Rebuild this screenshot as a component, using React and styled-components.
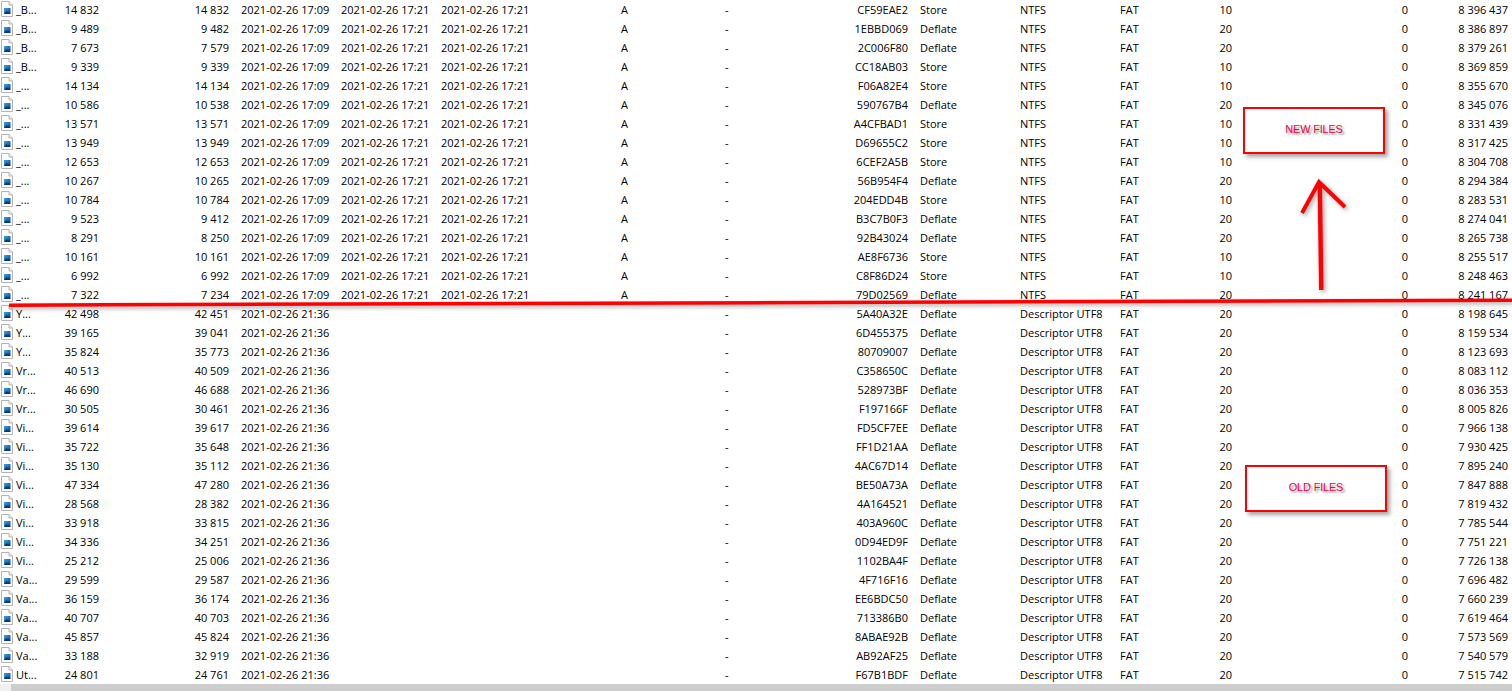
import React from 'react'
import styled, { createGlobalStyle } from 'styled-components'

const GlobalStyle = createGlobalStyle`
  html, body {
    margin: 0;
    height: 100%;
    overflow: hidden;
    background: #fff;
  }
`

const Window = styled.div`
  position: relative;
  width: 1512px;
  height: 691px;
  overflow: hidden;
  display: flex;
  flex-direction: column;
  background: #fff;
  color: #000;
  font-family: 'Open Sans', 'Liberation Sans', sans-serif;
  font-size: 11px;
`

const List = styled.div`
  flex: 1;
  display: flex;
  flex-direction: column;
`

const Row = styled.div`
  display: grid;
  grid-template-columns: 40px 59px 130px 112px 100px 100px 179px 100px 88px 112px 100px 60px 52px 176px 100px;
  height: 19px;
  line-height: 19px;
  white-space: nowrap;
`

const NameCell = styled.div`
  display: flex;
  align-items: center;
  gap: 3px;
  padding-left: 1px;
  svg {
    margin-bottom: 2px;
  }
`

const Cell = styled.div`
  text-align: ${(p) => (p.$right ? 'right' : 'left')};
  padding-left: ${(p) => p.$pad || 0}px;
`

const ScrollBar = styled.div`
  height: 7px;
  display: flex;
  background: #cdcdcd;
`

const ScrollButton = styled.div`
  width: 11px;
  background: #f0f0f0;
  overflow: hidden;
`

const Callout = styled.div`
  position: absolute;
  left: ${(p) => p.$x}px;
  top: ${(p) => p.$y}px;
  width: 142px;
  height: 47px;
  box-sizing: border-box;
  padding-bottom: 3px;
  border: 2px solid #f00;
  box-shadow: 3px 3px 4px rgba(0, 0, 0, 0.35);
  display: flex;
  align-items: center;
  justify-content: center;
  color: #f5003c;
  font-family: 'Liberation Sans', sans-serif;
  font-size: 11px;
  letter-spacing: -0.2px;
  text-shadow: 2px 2px 2px rgba(0, 0, 0, 0.4);
`

const Marks = styled.svg`
  position: absolute;
  left: 0;
  top: 0;
  filter: drop-shadow(2px 2px 2px rgba(0, 0, 0, 0.35));
`

const FileIcon = () => (
  <svg width="12" height="16" viewBox="0 0 12 16">
    <defs>
      <linearGradient id="pic" x1="0" y1="0" x2="1" y2="1">
        <stop offset="0" stopColor="#3aa6e8" />
        <stop offset="1" stopColor="#0b3f8c" />
      </linearGradient>
    </defs>
    <path d="M0.5 0.5H8L11.5 4V15.5H0.5Z" fill="#fff" stroke="#b4b4b4" />
    <path d="M8 0.5V4H11.5" fill="#eee" stroke="#b4b4b4" />
    <rect x="3" y="7" width="6.5" height="6" fill="url(#pic)" />
    <path d="M3 13L5.5 10L7 11.5L8 10.5L9.5 13Z" fill="#0a3479" />
  </svg>
)

const NEW_ROWS = [
  ['_B...', '14 832', '14 832', 'CF59EAE2', 'Store', '8 396 437'],
  ['_B...', '9 489', '9 482', '1EBBD069', 'Deflate', '8 386 897'],
  ['_B...', '7 673', '7 579', '2C006F80', 'Deflate', '8 379 261'],
  ['_B...', '9 339', '9 339', 'CC18AB03', 'Store', '8 369 859'],
  ['_...', '14 134', '14 134', 'F06A82E4', 'Store', '8 355 670'],
  ['_...', '10 586', '10 538', '590767B4', 'Deflate', '8 345 076'],
  ['_...', '13 571', '13 571', 'A4CFBAD1', 'Store', '8 331 439'],
  ['_...', '13 949', '13 949', 'D69655C2', 'Store', '8 317 425'],
  ['_...', '12 653', '12 653', '6CEF2A5B', 'Store', '8 304 708'],
  ['_...', '10 267', '10 265', '56B954F4', 'Deflate', '8 294 384'],
  ['_...', '10 784', '10 784', '204EDD4B', 'Store', '8 283 531'],
  ['_...', '9 523', '9 412', 'B3C7B0F3', 'Deflate', '8 274 041'],
  ['_...', '8 291', '8 250', '92B43024', 'Deflate', '8 265 738'],
  ['_...', '10 161', '10 161', 'AE8F6736', 'Store', '8 255 517'],
  ['_...', '6 992', '6 992', 'C8F86D24', 'Store', '8 248 463'],
  ['_...', '7 322', '7 234', '79D02569', 'Deflate', '8 241 167'],
]

const OLD_ROWS = [
  ['Y...', '42 498', '42 451', '5A40A32E', 'Deflate', '8 198 645'],
  ['Y...', '39 165', '39 041', '6D455375', 'Deflate', '8 159 534'],
  ['Y...', '35 824', '35 773', '80709007', 'Deflate', '8 123 693'],
  ['Vr...', '40 513', '40 509', 'C358650C', 'Deflate', '8 083 112'],
  ['Vr...', '46 690', '46 688', '528973BF', 'Deflate', '8 036 353'],
  ['Vr...', '30 505', '30 461', 'F197166F', 'Deflate', '8 005 826'],
  ['Vi...', '39 614', '39 617', 'FD5CF7EE', 'Deflate', '7 966 138'],
  ['Vi...', '35 722', '35 648', 'FF1D21AA', 'Deflate', '7 930 425'],
  ['Vi...', '35 130', '35 112', '4AC67D14', 'Deflate', '7 895 240'],
  ['Vi...', '47 334', '47 280', 'BE50A73A', 'Deflate', '7 847 888'],
  ['Vi...', '28 568', '28 382', '4A164521', 'Deflate', '7 819 432'],
  ['Vi...', '33 918', '33 815', '403A960C', 'Deflate', '7 785 544'],
  ['Vi...', '34 336', '34 251', '0D94ED9F', 'Deflate', '7 751 221'],
  ['Vi...', '25 212', '25 006', '1102BA4F', 'Deflate', '7 726 138'],
  ['Va...', '29 599', '29 587', '4F716F16', 'Deflate', '7 696 482'],
  ['Va...', '36 159', '36 174', 'EE6BDC50', 'Deflate', '7 660 239'],
  ['Va...', '40 707', '40 703', '713386B0', 'Deflate', '7 619 464'],
  ['Va...', '45 857', '45 824', '8ABAE92B', 'Deflate', '7 573 569'],
  ['Va...', '33 188', '32 919', 'AB92AF25', 'Deflate', '7 540 579'],
  ['Ut...', '24 801', '24 761', 'F67B1BDF', 'Deflate', '7 515 742'],
]

const FileRow = ({ data, isNew }) => {
  const [name, size, packed, crc, method, offset] = data
  return (
    <Row>
      <NameCell>
        <FileIcon />
        {name}
      </NameCell>
      <Cell $right>{size}</Cell>
      <Cell $right>{packed}</Cell>
      <Cell $pad={12}>2021-02-26 {isNew ? '17:09' : '21:36'}</Cell>
      <Cell>{isNew && '2021-02-26 17:21'}</Cell>
      <Cell>{isNew && '2021-02-26 17:21'}</Cell>
      <Cell $pad={80}>{isNew && 'A'}</Cell>
      <Cell $pad={5}>-</Cell>
      <Cell $right>{crc}</Cell>
      <Cell $pad={12}>{method}</Cell>
      <Cell>{isNew ? 'NTFS' : 'Descriptor UTF8'}</Cell>
      <Cell>FAT</Cell>
      <Cell $right>{method === 'Store' ? '10' : '20'}</Cell>
      <Cell $right>0</Cell>
      <Cell $right>{offset}</Cell>
    </Row>
  )
}

const App = () => (
  <Window>
    <GlobalStyle />
    <List>
      {NEW_ROWS.map((r) => (
        <FileRow key={r[3]} data={r} isNew />
      ))}
      {OLD_ROWS.map((r) => (
        <FileRow key={r[3]} data={r} />
      ))}
    </List>
    <ScrollBar>
      <ScrollButton>
        <svg width="11" height="7" viewBox="0 0 11 7">
          <path d="M1.5 7L5.5 3" fill="none" stroke="#505050" strokeWidth="1.6" />
        </svg>
      </ScrollButton>
    </ScrollBar>
    <Marks width="1512" height="691" viewBox="0 0 1512 691">
      <path d="M9 303.5L105 303L600 301.5L1180 299.5L1512 298.5V302L1180 303L600 305L105 306.5L9 307Z" fill="#f00" />
      <path d="M1317.5 182L1322 182L1323.5 290L1319 290Z" fill="#f00" />
      <path d="M1302 213L1319 182L1345 207" fill="none" stroke="#f00" strokeWidth="4" />
    </Marks>
    <Callout $x={1243} $y={107}>NEW FILES</Callout>
    <Callout $x={1245} $y={465}>OLD FILES</Callout>
  </Window>
)

export default App
